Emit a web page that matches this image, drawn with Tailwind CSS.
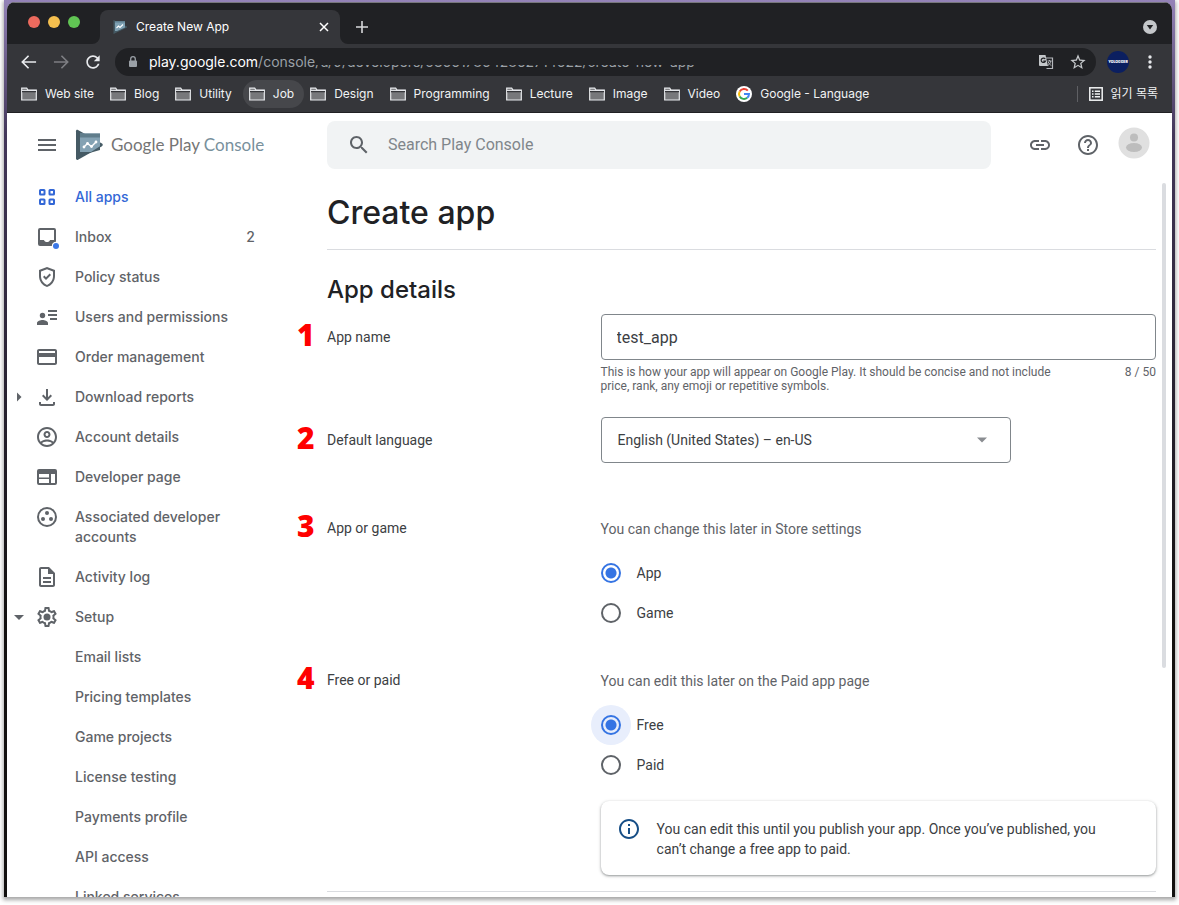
<!DOCTYPE html>
<html lang="en">
<head>
<meta charset="utf-8">
<meta name="viewport" content="width=device-width, initial-scale=1">
<title>Create New App</title>
<script src="https://cdn.jsdelivr.net/npm/@tailwindcss/browser@4"></script>
</head>
<body class="flex h-screen flex-col overflow-hidden bg-white font-['Roboto',sans-serif] text-sm text-[#3c4043]">
<!-- Desktop backdrop -->
<div class="mx-1 mb-2 flex min-h-0 flex-1 flex-col bg-linear-to-b from-[#9483b8] via-[#43375a] via-15% to-[#12100f] to-70% px-[3px] pt-[2px] shadow-[0_2px_4px_1px_rgba(0,0,0,0.35)]">
<div class="flex min-h-0 flex-1 flex-col overflow-hidden rounded-t-lg bg-white">

  <!-- Tab strip -->
  <div class="flex h-[42px] shrink-0 items-end border-t border-[#77777c] bg-[#202124] font-['Inter','Noto_Sans_CJK_KR',sans-serif] text-xs text-white">
    <div class="flex h-full w-[85px] shrink-0 items-center gap-2 pb-1 pl-[21px]">
      <button aria-label="Close window" class="size-3 rounded-full bg-[#ec6a5e]"></button>
      <button aria-label="Minimize window" class="size-3 rounded-full bg-[#f4bf4f]"></button>
      <button aria-label="Zoom window" class="size-3 rounded-full bg-[#61c554]"></button>
    </div>
    <svg class="size-2 shrink-0" viewBox="0 0 8 8"><path d="M8 0v8H0a8 8 0 0 0 8-8z" fill="#35363a"/></svg>
    <div class="flex h-[34px] w-60 items-center rounded-t-lg bg-[#35363a] pr-2.5 pl-3">
      <svg class="size-4" viewBox="0 0 16 16"><path d="M1.500 1v14L15 8.500v-1z" fill="#455a64"/><path d="M3 2h10v6.500L5 12H3z" fill="#7fa1b3"/><path d="M3 2h10v1.500H3z" fill="#5f7f8f"/><path d="m4.500 9 2-2 1.500 1.500 3-3" fill="none" stroke="#fff" stroke-width="1.100"/></svg>
      <span class="ml-2 flex-1">Create New App</span>
      <button aria-label="Close tab" class="flex size-3"><svg class="size-3" viewBox="0 0 12 12"><path d="m2 2 8 8m0-8-8 8" stroke="#fff" stroke-width="1.500"/></svg></button>
    </div>
    <svg class="size-2 shrink-0" viewBox="0 0 8 8"><path d="M0 0v8h8a8 8 0 0 1-8-8z" fill="#35363a"/></svg>
    <button aria-label="New tab" class="mb-2.5 ml-[7px] flex"><svg class="size-3.5" viewBox="0 0 14 14"><path d="M7 1v12M1 7h12" stroke="#d8d9db" stroke-width="1.600"/></svg></button>
    <button aria-label="Search tabs" class="mr-[15px] mb-2.5 ml-auto flex"><svg class="size-3.5" viewBox="0 0 14 14"><circle cx="7" cy="7" r="7" fill="#c4c7ca"/><path d="M3.800 5h6.400L7 9.600z" fill="#202124"/></svg></button>
  </div>

  <!-- Address bar -->
  <div class="flex h-9 shrink-0 items-center bg-[#35363a] px-2.5 font-['Inter',sans-serif]">
    <button aria-label="Back" class="flex w-8 pl-0.5"><svg class="size-5" viewBox="0 0 24 24"><path d="M20.500 12H4.500m7-7.500L4 12l7.500 7.500" fill="none" stroke="#e8eaed" stroke-width="2"/></svg></button>
    <button aria-label="Forward" class="flex w-8 pl-0.5"><svg class="size-5" viewBox="0 0 24 24"><path d="M3.500 12h16m-7-7.500L20 12l-7.500 7.500" fill="none" stroke="#7d7e82" stroke-width="2"/></svg></button>
    <button aria-label="Reload" class="flex w-[34px] pl-0.5"><svg class="size-5" viewBox="0 0 24 24"><path fill="#e8eaed" d="M17.650 6.350C16.200 4.900 14.210 4 12 4c-4.420 0-7.990 3.580-7.990 8s3.570 8 7.990 8c3.730 0 6.840-2.550 7.730-6h-2.080c-.820 2.330-3.040 4-5.650 4-3.310 0-6-2.690-6-6s2.690-6 6-6c1.660 0 3.140.690 4.220 1.780L13 11h7V4l-2.350 2.350z"/></svg></button>
    <div class="flex h-7 min-w-0 flex-1 items-center rounded-full bg-[#202124] pr-2.5 pl-[11px]">
      <svg class="size-3.5 shrink-0" viewBox="0 0 14 14"><rect x="3" y="5.500" width="8" height="6.500" rx="1" fill="#9aa0a6"/><path d="M4.700 6V4a2.300 2.300 0 0 1 4.600 0v2" fill="none" stroke="#9aa0a6" stroke-width="1.300"/></svg>
      <div class="ml-[9px] flex min-w-0 flex-1 items-center leading-5 whitespace-nowrap">
        <span class="text-white">play.google.com</span><span class="text-[#9aa0a6]">/console</span><span class="relative text-[#9aa0a6]">/u/0/developers/5366178642862714622/create-new-app<span class="absolute inset-x-0 top-0 h-[13px] bg-[#202124]"></span></span>
      </div>
      <button aria-label="Translate this page" class="mr-4 flex"><svg class="size-4" viewBox="0 0 16 16"><path d="M7.500 4h7v10.500h-6" fill="none" stroke="#b4b7bb" stroke-width="1.200"/><path d="M1 1h6.500l2.500 11H2a1 1 0 0 1-1-1z" fill="#c4c7ca"/><path d="M7.200 5A2.200 2.200 0 1 0 7.400 7.200H5.300" fill="none" stroke="#202124" stroke-width="1.200"/><path d="M9.500 7h4M11.500 6v1m1.300 0c-.3 2-1.300 3.500-3 4.500m.5-3.500c.5 1.500 1.500 2.500 3 3.500" fill="none" stroke="#b4b7bb"/></svg></button>
      <button aria-label="Bookmark this tab" class="flex"><svg class="size-4" viewBox="0 0 24 24"><path fill="#c4c7ca" d="M23.500 8.900l-8.300-.72L12 .5 8.800 8.190.5 8.900l6.300 5.460L4.910 22.500 12 18.180l7.090 4.320-1.880-8.140zM12 16.100l-4.280 2.580 1.140-4.870L5.080 10.540l4.980-.430L12 5.500l1.950 4.620 4.980.430-3.780 3.280 1.140 4.870z"/></svg></button>
    </div>
    <button aria-label="Profile" class="ml-[11px] flex size-[22px] items-center justify-center rounded-full bg-[#0b1f60]"><svg class="size-[22px]" viewBox="0 0 22 22"><text x="11" y="12.300" text-anchor="middle" font-family="Inter, sans-serif" font-size="3.500" font-weight="900" fill="#fff">YOLOGGER</text></svg></button>
    <button aria-label="Browser menu" class="mr-0.5 ml-[11px] flex"><svg class="h-4 w-5" viewBox="0 0 20 16" fill="#e8eaed"><circle cx="10" cy="3" r="1.700"/><circle cx="10" cy="8" r="1.700"/><circle cx="10" cy="13" r="1.700"/></svg></button>
  </div>

  <!-- Bookmarks bar -->
  <svg class="hidden"><symbol id="folder" viewBox="0 0 16 14"><path d="M.700 13V1.200h5l1.300 2h8.300V13z" fill="#77787b" stroke="#e8eaed" stroke-width="1.200"/><path d="M1 4.600h14" stroke="#35363a" stroke-width="1.200"/><path d="M.500 3.400h15" stroke="#e8eaed" stroke-width="1"/></symbol></svg>
  <div class="flex h-[33px] shrink-0 items-center justify-between overflow-hidden border-b border-[#202124] bg-[#35363a] pr-3.5 pl-2 font-['Inter','Noto_Sans_CJK_KR',sans-serif] text-xs whitespace-nowrap text-[#f1f3f4]">
    <nav aria-label="Bookmarks" class="-mt-1 flex">
      <a href="#" class="flex h-7 items-center gap-2 rounded-full pr-2.5 pl-1.5"><svg class="h-3.5 w-4"><use href="#folder"/></svg>Web site</a>
      <a href="#" class="flex h-7 items-center gap-2 rounded-full pr-2.5 pl-1.5"><svg class="h-3.5 w-4"><use href="#folder"/></svg>Blog</a>
      <a href="#" class="flex h-7 items-center gap-2 rounded-full pr-2.5 pl-1.5"><svg class="h-3.5 w-4"><use href="#folder"/></svg>Utility</a>
      <a href="#" class="ml-px flex h-7 items-center gap-2 rounded-full bg-[#46474b] pr-2.5 pl-1.5"><svg class="h-3.5 w-4"><use href="#folder"/></svg>Job</a>
      <a href="#" class="flex h-7 items-center gap-2 rounded-full pr-2.5 pl-1.5"><svg class="h-3.5 w-4"><use href="#folder"/></svg>Design</a>
      <a href="#" class="flex h-7 items-center gap-2 rounded-full pr-2.5 pl-1.5"><svg class="h-3.5 w-4"><use href="#folder"/></svg>Programming</a>
      <a href="#" class="flex h-7 items-center gap-2 rounded-full pr-2.5 pl-1.5"><svg class="h-3.5 w-4"><use href="#folder"/></svg>Lecture</a>
      <a href="#" class="flex h-7 items-center gap-2 rounded-full pr-2.5 pl-1.5"><svg class="h-3.5 w-4"><use href="#folder"/></svg>Image</a>
      <a href="#" class="flex h-7 items-center gap-2 rounded-full pr-2.5 pl-1.5"><svg class="h-3.5 w-4"><use href="#folder"/></svg>Video</a>
      <a href="#" class="flex h-7 items-center gap-2 rounded-full pr-2.5 pl-1.5"><svg class="size-4" viewBox="0 0 16 16" fill="none" stroke-width="2"><circle cx="8" cy="8" r="8" fill="#fff"/><path d="M11.800 4.700A5 5 0 0 0 3.700 5.500" stroke="#ea4335"/><path d="M3.700 5.500a5 5 0 0 0 0 5" stroke="#fbbc05"/><path d="M3.700 10.500a5 5 0 0 0 7.500 1.300" stroke="#34a853"/><path d="M11.200 11.800A5 5 0 0 0 13 8H8" stroke="#4285f4"/></svg>Google - Language</a>
    </nav>
    <button class="-mt-1 flex items-center gap-1.5 border-l border-[#5f6064] pl-2.5"><svg class="size-4" viewBox="0 0 16 16"><rect x="1.800" y="1.800" width="12.400" height="12.400" fill="none" stroke="#f1f3f4" stroke-width="1.500"/><path d="M4 5.200h1.500M4 8h1.500M4 10.800h1.500M6.800 5.200H12M6.800 8H12M6.800 10.800H12" stroke="#f1f3f4" stroke-width="1.400"/></svg>읽기 목록</button>
  </div>

  <!-- Console header -->
  <header class="flex h-16 shrink-0 items-center pr-[22px]">
    <div class="flex w-80 shrink-0 items-center pl-7">
      <button aria-label="Toggle navigation" class="flex"><svg class="size-6" viewBox="0 0 24 24"><path d="M3 7h18M3 12h18M3 17h18" stroke="#5f6368" stroke-width="2"/></svg></button>
      <a href="#" class="ml-4 flex items-center gap-2 font-['Lato',sans-serif] text-[17px] whitespace-nowrap text-[#757575]">
        <svg class="h-8 w-7" viewBox="0 0 28 32"><path d="M1 2.200C1 1 2 .500 3 1l24 13.500c1 .7 1 2 0 2.700L3 30.800c-1 .5-2 0-2-1.200z" fill="#455a64"/><path d="M5 5h20v16L11 25H5z" fill="#455a64"/><path d="M5 4.500h20v12.800L16 23H5z" fill="#84a2b3"/><path d="M5 4.500h20v4H5z" fill="#607d8b"/><path d="m9 18 3.500-3.500 4 3L21 13" fill="none" stroke="#fff" stroke-width="1.400"/><g fill="#fff"><circle cx="9" cy="18" r="1.400"/><circle cx="12.500" cy="14.500" r="1.400"/><circle cx="16.500" cy="17.500" r="1.400"/><circle cx="21" cy="13" r="1.400"/></g></svg>
        <span>Google Play <span class="text-[#78909c]">Console</span></span>
      </a>
    </div>
    <label class="flex h-12 min-w-0 flex-1 items-center gap-[17px] rounded-lg bg-[#f1f3f4] pl-5">
      <svg class="size-6 shrink-0" viewBox="0 0 24 24" fill="#5f6368"><path d="M15.500 14h-.790l-.280-.270C15.410 12.590 16 11.110 16 9.500 16 5.910 13.090 3 9.500 3S3 5.910 3 9.500 5.910 16 9.500 16c1.610 0 3.090-.590 4.230-1.570l.270.280v.790l5 4.990L20.490 19l-4.990-5zm-6 0C7.010 14 5 11.990 5 9.500S7.010 5 9.500 5 14 7.010 14 9.500 11.990 14 9.500 14z"/></svg>
      <input type="search" aria-label="Search Play Console" placeholder="Search Play Console" class="min-w-0 flex-1 bg-transparent text-base outline-none placeholder:text-[#80868b]">
    </label>
    <div class="ml-[37px] flex items-center">
      <button aria-label="Copy link" class="mr-6 flex"><svg class="size-6" viewBox="0 0 24 24" fill="#5f6368"><path d="M3.900 12c0-1.710 1.390-3.100 3.100-3.100h4V7H7c-2.760 0-5 2.240-5 5s2.240 5 5 5h4v-1.900H7c-1.710 0-3.100-1.390-3.100-3.100zM8 13h8v-2H8v2zm9-6h-4v1.900h4c1.710 0 3.100 1.390 3.100 3.100s-1.390 3.100-3.100 3.100h-4V17h4c2.760 0 5-2.240 5-5s-2.240-5-5-5z"/></svg></button>
      <button aria-label="Help" class="mr-[18px] flex"><svg class="size-6" viewBox="0 0 24 24" fill="#5f6368"><path d="M11 18h2v-2h-2v2zm1-16C6.480 2 2 6.480 2 12s4.480 10 10 10 10-4.480 10-10S17.520 2 12 2zm0 18c-4.410 0-8-3.590-8-8s3.590-8 8-8 8 3.590 8 8-3.590 8-8 8zm0-14c-2.210 0-4 1.790-4 4h2c0-1.100.9-2 2-2s2 .9 2 2c0 2-3 1.750-3 5h2c0-2.250 3-2.500 3-5 0-2.210-1.790-4-4-4z"/></svg></button>
      <button aria-label="Account" class="mb-1 flex"><svg class="size-8" viewBox="0 0 32 32"><circle cx="16" cy="16" r="15.500" fill="#e0e0e0"/><circle cx="16" cy="10.500" r="4" fill="#bdbdbd"/><ellipse cx="16" cy="20.500" rx="8" ry="4.500" fill="#bdbdbd"/></svg></button>
    </div>
  </header>

  <div class="relative flex min-h-0 flex-1">
    <!-- Side navigation -->
    <nav aria-label="Console" class="w-72 shrink-0 overflow-hidden pr-10 font-['Inter',sans-serif] font-medium leading-5 text-[#5f6368]">
      <a href="#" aria-current="page" class="flex gap-4 py-2.5 pl-7 text-[#3367d6]"><svg class="-my-0.5 size-6 shrink-0" viewBox="0 0 24 24" fill="none" stroke="#3367d6" stroke-width="2"><rect x="5" y="5" width="4.500" height="4.500" rx=".5"/><rect x="14.500" y="5" width="4.500" height="4.500" rx=".5"/><rect x="5" y="14.500" width="4.500" height="4.500" rx=".5"/><rect x="14.500" y="14.500" width="4.500" height="4.500" rx=".5"/></svg>All apps</a>
      <a href="#" class="flex gap-4 py-2.5 pl-7"><svg class="-my-0.5 size-6 shrink-0" viewBox="0 0 24 24"><path fill="#5f6368" fill-rule="evenodd" d="M5 3h14a2 2 0 0 1 2 2v14a2 2 0 0 1-2 2H5a2 2 0 0 1-2-2V5a2 2 0 0 1 2-2zm0 2v10h4c.5 1.500 1.500 2 3 2s2.500-.5 3-2h4V5z"/><circle cx="21" cy="21" r="4.200" fill="#fff"/><circle cx="21" cy="21" r="3" fill="#3b78e7"/></svg><span class="flex-1">Inbox</span><span>2</span></a>
      <a href="#" class="flex gap-4 py-2.5 pl-7"><svg class="-my-0.5 size-6 shrink-0" viewBox="0 0 24 24" fill="#5f6368"><path d="M12 2L4 5v6.090c0 5.050 3.410 9.760 8 10.910 4.590-1.150 8-5.860 8-10.910V5l-8-3zm6 9.090c0 4-2.550 7.700-6 8.830-3.450-1.130-6-4.820-6-8.830v-4.700l6-2.250 6 2.250v4.700zM9.410 10.590L8 12l3 3 5-5-1.410-1.410L11 12.170z"/></svg>Policy status</a>
      <a href="#" class="flex gap-4 py-2.5 pl-7"><svg class="-my-0.5 size-6 shrink-0" viewBox="0 0 24 24" fill="#5f6368"><circle cx="7.500" cy="10.500" r="2.700"/><path d="M2 20v-1.800C2 15.800 5.500 15 7.500 15s5.500.8 5.500 3.200V20zM13 5h9v2h-9zM13 9h9v2h-9zM15 13h7v2h-7z"/></svg>Users and permissions</a>
      <a href="#" class="flex gap-4 py-2.5 pl-7"><svg class="-my-0.5 size-6 shrink-0" viewBox="0 0 24 24" fill="#5f6368"><path d="M20 4H4c-1.110 0-1.990.890-1.990 2L2 18c0 1.110.890 2 2 2h16c1.110 0 2-.890 2-2V6c0-1.110-.890-2-2-2zm0 14H4v-6h16v6zm0-10H4V6h16v2z"/></svg>Order management</a>
      <a href="#" class="flex py-2.5 pl-2"><svg class="mr-3 h-5 w-2" viewBox="0 0 8 20"><path d="M2 5.500 6.500 10 2 14.500z" fill="#5f6368"/></svg><svg class="-my-0.5 mr-4 size-6 shrink-0" viewBox="0 0 24 24" fill="#5f6368"><path d="M18 17v2H6v-2H4v2c0 1.100.9 2 2 2h12c1.100 0 2-.9 2-2v-2h-2zm-1-6l-1.410-1.410L13 12.170V4h-2v8.170L8.410 9.590 7 11l5 5 5-5z"/></svg>Download reports</a>
      <a href="#" class="flex gap-4 py-2.5 pl-7"><svg class="-my-0.5 size-6 shrink-0" viewBox="0 0 24 24" fill="#5f6368"><path d="M12 2C6.480 2 2 6.480 2 12s4.480 10 10 10 10-4.480 10-10S17.520 2 12 2zM7.070 18.280c.430-.9 3.050-1.780 4.930-1.780s4.510.880 4.930 1.780C15.570 19.360 13.860 20 12 20s-3.570-.640-4.930-1.720zm11.290-1.450c-1.430-1.740-4.900-2.330-6.360-2.330s-4.930.590-6.360 2.330C4.620 15.490 4 13.820 4 12c0-4.410 3.590-8 8-8s8 3.590 8 8c0 1.820-.620 3.490-1.640 4.830zM12 6c-1.940 0-3.500 1.560-3.500 3.500S10.060 13 12 13s3.500-1.560 3.500-3.500S13.940 6 12 6zm0 5c-.830 0-1.500-.670-1.500-1.500S11.170 8 12 8s1.500.670 1.500 1.500S12.830 11 12 11z"/></svg>Account details</a>
      <a href="#" class="flex gap-4 py-2.5 pl-7"><svg class="-my-0.5 size-6 shrink-0" viewBox="0 0 24 24" fill="#5f6368"><path fill-rule="evenodd" d="M4 4h16a2 2 0 0 1 2 2v12a2 2 0 0 1-2 2H4a2 2 0 0 1-2-2V6a2 2 0 0 1 2-2zm0 5v3.500h10V9zm0 5v4h10v-4zm12-5v9h4V9z"/></svg>Developer page</a>
      <a href="#" class="flex gap-4 py-2.5 pl-7"><svg class="-my-0.5 size-6 shrink-0" viewBox="0 0 24 24" fill="#5f6368"><circle cx="12" cy="12" r="9" fill="none" stroke="#5f6368" stroke-width="2"/><circle cx="12" cy="8" r="2"/><circle cx="8" cy="14" r="2"/><circle cx="16" cy="14" r="2"/></svg>Associated developer accounts</a>
      <a href="#" class="flex gap-4 py-2.5 pl-7"><svg class="-my-0.5 size-6 shrink-0" viewBox="0 0 24 24" fill="#5f6368"><path d="M8 16h8v2H8zm0-4h8v2H8zm6-10H6c-1.100 0-2 .9-2 2v16c0 1.100.890 2 1.990 2H18c1.100 0 2-.9 2-2V8l-6-6zm4 18H6V4h7v5h5v11z"/></svg>Activity log</a>
      <button aria-expanded="true" class="flex py-2.5 pl-[7px] font-medium"><svg class="mr-[11px] h-5 w-2.5" viewBox="0 0 10 20"><path d="M0 8h10l-5 5z" fill="#5f6368"/></svg><svg class="-my-0.5 mr-4 size-6 shrink-0" viewBox="0 0 24 24" fill="#5f6368"><path d="M19.430 12.980c.040-.320.070-.640.070-.980 0-.340-.030-.660-.070-.980l2.110-1.650c.190-.150.240-.420.120-.640l-2-3.460c-.090-.160-.260-.250-.440-.250-.060 0-.120.010-.170.030l-2.490 1c-.520-.4-1.080-.730-1.690-.980l-.380-2.650C14.460 2.180 14.250 2 14 2h-4c-.250 0-.460.180-.490.420l-.380 2.650c-.610.250-1.170.590-1.690.980l-2.490-1c-.060-.020-.120-.030-.180-.030-.170 0-.340.090-.430.250l-2 3.460c-.130.220-.070.490.120.640l2.110 1.650c-.040.320-.070.650-.070.980 0 .330.030.660.070.980l-2.110 1.650c-.190.150-.240.420-.120.640l2 3.460c.090.160.260.250.440.250.060 0 .120-.010.170-.030l2.490-1c.520.4 1.080.730 1.690.980l.380 2.650c.030.240.240.420.490.420h4c.250 0 .460-.180.490-.420l.380-2.650c.610-.250 1.170-.590 1.690-.980l2.490 1c.060.020.120.030.180.030.170 0 .340-.090.430-.250l2-3.460c.120-.220.070-.490-.120-.640l-2.110-1.650zm-1.980-1.710c.040.310.050.520.050.730 0 .210-.020.430-.050.730l-.140 1.130.890.7 1.080.840-.7 1.210-1.270-.510-1.040-.420-.9.680c-.430.320-.840.560-1.250.730l-1.060.430-.160 1.130-.2 1.350h-1.400l-.190-1.350-.160-1.130-1.060-.430c-.430-.180-.830-.410-1.230-.710l-.910-.7-1.060.430-1.270.510-.7-1.210 1.080-.840.890-.7-.140-1.130c-.030-.310-.050-.540-.050-.740s.020-.430.050-.730l.140-1.130-.890-.7-1.080-.840.7-1.210 1.270.510 1.040.420.9-.680c.430-.320.840-.560 1.250-.730l1.060-.430.160-1.130.2-1.350h1.390l.190 1.350.160 1.130 1.060.430c.430.180.830.410 1.230.710l.910.7 1.060-.430 1.270-.510.7 1.210-1.070.850-.890.7.140 1.130z"/><circle cx="12" cy="12" r="3.500"/></svg>Setup</button>
      <a href="#" class="block py-2.5 pl-[68px]">Email lists</a>
      <a href="#" class="block py-2.5 pl-[68px]">Pricing templates</a>
      <a href="#" class="block py-2.5 pl-[68px]">Game projects</a>
      <a href="#" class="block py-2.5 pl-[68px]">License testing</a>
      <a href="#" class="block py-2.5 pl-[68px]">Payments profile</a>
      <a href="#" class="block py-2.5 pl-[68px]">API access</a>
      <a href="#" class="block py-2.5 pl-[68px]">Linked services</a>
    </nav>

    <!-- Create app form -->
    <main class="min-w-0 flex-1 overflow-hidden pr-4 pl-8">
      <h1 class="border-b border-[#dadce0] pt-4 pb-4 font-['Inter',sans-serif] text-[32px] leading-10 font-medium text-[#202124]">Create app</h1>
      <form>
        <h2 class="pt-6 pb-2 font-['Inter',sans-serif] text-2xl leading-8 font-medium text-[#202124]">App details</h2>
        <div class="grid grid-cols-[33%_1fr]">
          <div class="-ml-[30px] flex h-[46px] items-center"><span class="w-[30px] pb-1 font-['Open_Sans',sans-serif] text-[30px] leading-8 font-extrabold text-[#ff0000]">1</span><label for="app-name">App name</label></div>
          <div>
            <input id="app-name" type="text" value="test_app" aria-describedby="app-name-help" class="block h-[46px] w-full rounded border border-[#80868b] px-[15px] text-base outline-none">
            <div class="mt-[5px] flex justify-between gap-10 text-xs leading-[14px] text-[#5f6368]">
              <p id="app-name-help">This is how your app will appear on Google Play. It should be concise and not include<br>price, rank, any emoji or repetitive symbols.</p>
              <span class="whitespace-nowrap">8 / 50</span>
            </div>
          </div>
        </div>
        <div class="mt-6 grid grid-cols-[33%_1fr]">
          <div class="-ml-[30px] flex h-[46px] items-center"><span class="w-[30px] pb-1 font-['Open_Sans',sans-serif] text-[30px] leading-8 font-extrabold text-[#ff0000]">2</span><label for="language">Default language</label></div>
          <div class="relative w-[410px] max-w-full">
            <select id="language" class="block h-[46px] w-full appearance-none rounded border border-[#80868b] px-4 text-sm outline-none"><option>English (United States) – en-US</option></select>
            <svg class="pointer-events-none absolute top-5 right-6 h-[6px] w-[10px]" viewBox="0 0 10 6"><path d="M0 .500h10l-5 5z" fill="#8a8d91"/></svg>
          </div>
        </div>
        <fieldset class="mt-14 grid grid-cols-[33%_1fr]">
          <div class="-mt-px -ml-[30px] flex h-5 items-center"><span class="w-[30px] pb-1 font-['Open_Sans',sans-serif] text-[30px] leading-8 font-extrabold text-[#ff0000]">3</span><span>App or game</span></div>
          <div>
            <p class="leading-5 text-[#5f6368]">You can change this later in Store settings</p>
            <div class="mt-3.5">
              <label class="flex h-10 items-center gap-4"><input type="radio" name="kind" checked class="size-5 appearance-none rounded-full border-2 border-[#5f6368] checked:border-[#3574e3] checked:bg-[radial-gradient(circle,#3574e3_5px,transparent_6px)]">App</label>
              <label class="flex h-10 items-center gap-4"><input type="radio" name="kind" class="size-5 appearance-none rounded-full border-2 border-[#5f6368] checked:border-[#3574e3] checked:bg-[radial-gradient(circle,#3574e3_5px,transparent_6px)]">Game</label>
            </div>
          </div>
        </fieldset>
        <fieldset class="mt-[38px] grid grid-cols-[33%_1fr]">
          <div class="-mt-px -ml-[30px] flex h-5 items-center"><span class="w-[30px] pb-1 font-['Open_Sans',sans-serif] text-[30px] leading-8 font-extrabold text-[#ff0000]">4</span><span>Free or paid</span></div>
          <div>
            <p class="leading-5 text-[#5f6368]">You can edit this later on the Paid app page</p>
            <div class="mt-3.5">
              <label class="flex h-10 items-center gap-4"><input type="radio" name="price" checked class="size-5 appearance-none rounded-full border-2 border-[#3574e3] bg-[#e8eefc] bg-[radial-gradient(circle,#3574e3_5px,transparent_6px)] shadow-[0_0_0_10px_#e8eefc]">Free</label>
              <label class="flex h-10 items-center gap-4"><input type="radio" name="price" class="size-5 appearance-none rounded-full border-2 border-[#5f6368] checked:border-[#3574e3] checked:bg-[radial-gradient(circle,#3574e3_5px,transparent_6px)]">Paid</label>
            </div>
            <div class="mt-4 flex gap-4 rounded-lg px-4 pt-[18px] pb-4 leading-5 shadow-[0_1px_2px_0_rgba(60,64,67,0.4),0_1px_3px_1px_rgba(60,64,67,0.15)]">
              <svg class="-mt-0.5 size-6 shrink-0" viewBox="0 0 24 24" fill="#174e86"><path d="M11 7h2v2h-2zm0 4h2v6h-2zm1-9C6.480 2 2 6.480 2 12s4.480 10 10 10 10-4.480 10-10S17.520 2 12 2zm0 18c-4.410 0-8-3.590-8-8s3.590-8 8-8 8 3.590 8 8-3.590 8-8 8z"/></svg>
              <p class="max-w-[460px]">You can edit this until you publish your app. Once you’ve published, you can’t change a free app to paid.</p>
            </div>
          </div>
        </fieldset>
        <hr class="mt-4 border-[#dadce0]">
      </form>
    </main>
    <div class="absolute top-[6px] right-[6px] h-[485px] w-1 rounded-full bg-[#dadce0]"></div>
  </div>
</div>
</div>
</body>
</html>
